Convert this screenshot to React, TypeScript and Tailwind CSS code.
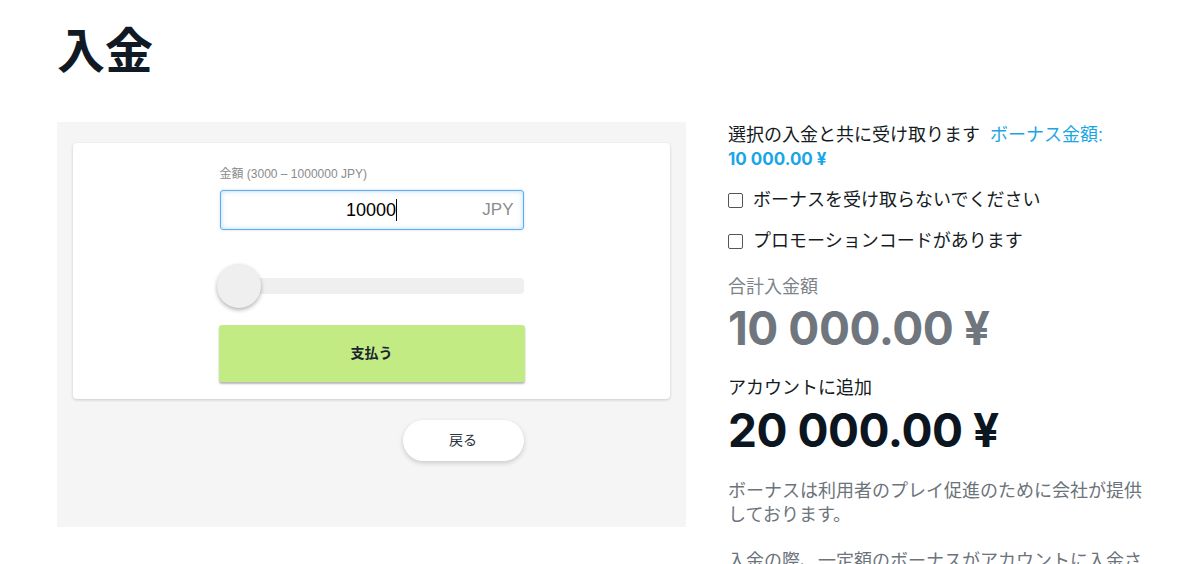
const jp = "font-['Liberation_Sans','Noto_Sans_CJK_JP',sans-serif]";
const num = "font-['Inter','Liberation_Sans',sans-serif]";

function AmountCard() {
  return (
    <div className="rounded-[4px] bg-white pt-[24px] pb-[17px] shadow-[0_1px_3px_rgba(0,0,0,0.18)]">
      <div className="mx-auto w-[304px]">
        <p className="text-[12px] leading-[14px] text-[#8a8a8a]">金額 (3000 – 1000000 JPY)</p>
        <div className="relative mt-[9px] flex h-[40px] items-center justify-center rounded-[3px] border border-[#62ade8] shadow-[inset_0_0_5px_rgba(90,170,235,0.45),0_0_3px_rgba(90,170,235,0.35)]">
          <span className="text-[18px] text-black">10000</span>
          <span className="h-[22px] w-px bg-black" />
          <span className="absolute right-[9px] text-[17px] text-[#8c8c8c]">JPY</span>
        </div>
        <div className="relative mt-[48px] h-[16px] rounded-[4px] bg-[#efefef]">
          <div className="absolute left-[-3px] top-[-14px] h-[44px] w-[44px] rounded-full bg-[#efefef] shadow-[0_2px_4px_rgba(0,0,0,0.3)]" />
        </div>
        <button className="mt-[31px] flex h-[57px] w-[306px] -translate-x-px items-center justify-center rounded-[3px] bg-[#c2eb84] text-[14px] font-bold text-[#1c2430] shadow-[0_2px_2px_rgba(0,0,0,0.28)]">
          支払う
        </button>
      </div>
    </div>
  );
}

function Check({ label }: { label: string }) {
  return (
    <label className="flex items-center gap-[10px]">
      <span className="h-[15px] w-[15px] rounded-[2px] border-[1.5px] border-[#555]" />
      <span>{label}</span>
    </label>
  );
}

export default function App() {
  return (
    <div className={`min-h-[564px] bg-white px-[57px] ${jp}`}>
      <h1 className="pt-[26px] text-[48px] font-bold leading-[52px] text-[#111a24]">入金</h1>
      <div className="mt-[44px] flex gap-[42px]">
        <div className="h-[405px] w-[629px] shrink-0 bg-[#f5f5f5] px-[16px] pt-[21px]">
          <AmountCard />
          <div className="mx-auto mt-[21px] flex w-[304px] justify-end">
            <button className="h-[41px] w-[121px] rounded-full bg-white text-[14px] text-[#2a3440] shadow-[0_2px_5px_rgba(0,0,0,0.18)]">
              戻る
            </button>
          </div>
        </div>
        <div className="w-[420px] pt-px text-[18px] leading-[24px] text-[#141b22]">
          <p>
            選択の入金と共に受け取ります<span className="ml-[10px] text-[#1aa6e6]">ボーナス金額:</span>
            <br />
            <span className={`${num} text-[17px] font-bold text-[#1aa6e6]`}>10 000.00 ¥</span>
          </p>
          <div className="mt-[17px]">
            <Check label="ボーナスを受け取らないでください" />
          </div>
          <div className="mt-[17px]">
            <Check label="プロモーションコードがあります" />
          </div>
          <p className="mt-[22px] text-[#7c838b]">合計入金額</p>
          <p className={`${num} mt-[5px] text-[46px] font-bold leading-[48px] tracking-[-0.01em] text-[#6f767e]`}>10 000.00 ¥</p>
          <p className="mt-[24px]">アカウントに追加</p>
          <p className={`${num} mt-[6px] text-[46px] font-bold leading-[48px] tracking-[-0.01em] text-[#0c1620]`}>20 000.00 ¥</p>
          <p className="mt-[25px] text-[#6c737b]">
            ボーナスは利用者のプレイ促進のために会社が提供しております。
          </p>
          <p className="mt-[22px] text-[#6c737b]">
            入金の際、一定額のボーナスがアカウントに入金されます。
          </p>
        </div>
      </div>
    </div>
  );
}
